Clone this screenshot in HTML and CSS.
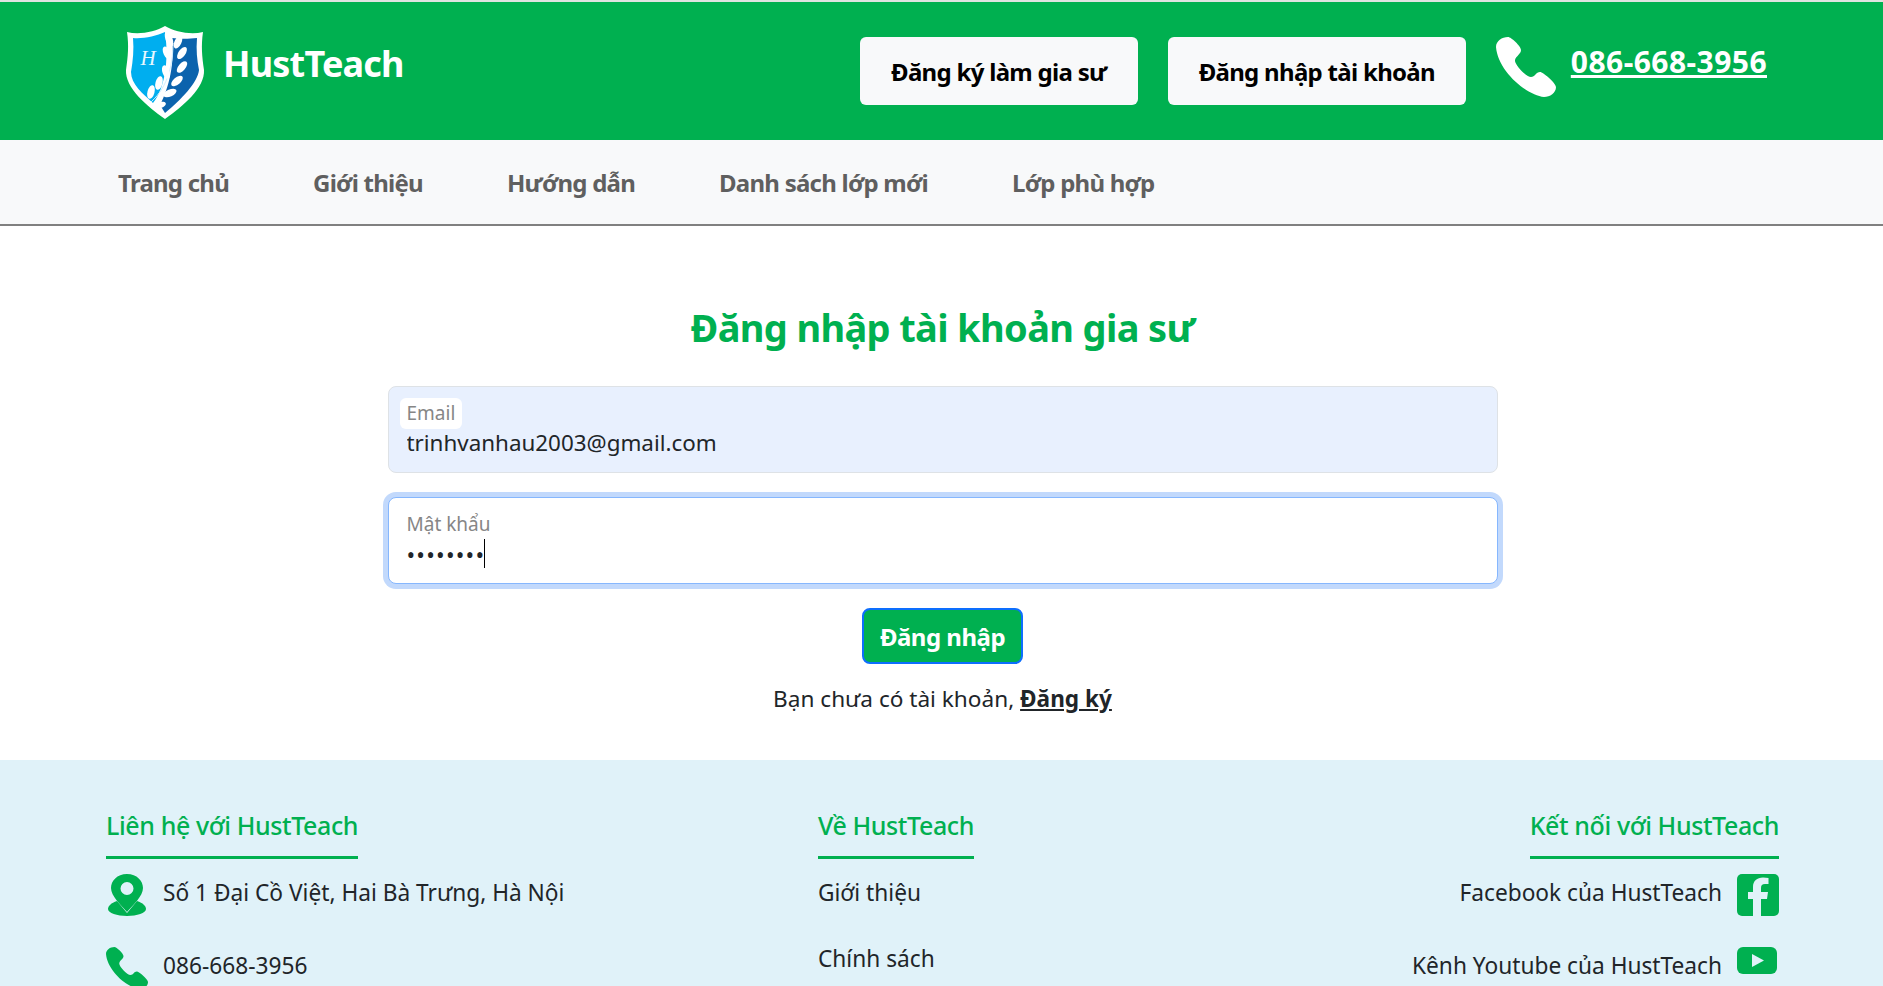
FILE: index.html
```html
<!DOCTYPE html>
<html lang="vi">
<head>
  <meta charset="utf-8" />
  <title>HustTeach - Đăng nhập</title>
  <link rel="stylesheet" href="styles.css">
</head>
<body>
<div class="page">

  <!-- HEADER -->
  <header class="topbar">
    <a class="brand" href="#">
      <svg class="brand-logo" viewBox="0 0 80 94">
        <path d="M40 0 C30 6 14 9 2 6 C4 20 3 30 1 44 C0 62 22 80 40 93 C58 80 80 62 79 44 C77 30 76 20 78 6 C66 9 50 6 40 0Z" fill="#fff"/>
        <path d="M40 6 C31 10 18 13 8 12 C9 24 8 34 6 46 C6 58 18 68 28 77 C40 62 44 34 40 6Z" fill="#00aeef"/>
        <path d="M47 12 C54 13 64 13 72 12 C71 24 72 34 74 44 C73 56 56 74 40 87 L35 79 C44 62 50 36 47 12Z" fill="#0b63ad"/>
        <text class="brand-h" x="23" y="39" text-anchor="middle">H</text>
        <path d="M48 17 C48 36 44 60 26 76" fill="none" stroke="#cfefff" stroke-width="1"/>
        <g fill="#fff">
          <ellipse cx="44" cy="13" rx="3.500" ry="8" transform="rotate(-20 44 13)"/>
          <ellipse cx="42" cy="27" rx="3.500" ry="7" transform="rotate(-25 42 27)"/>
          <ellipse cx="41" cy="46" rx="3.500" ry="7" transform="rotate(-20 41 46)"/>
          <ellipse cx="34" cy="57" rx="3.500" ry="7" transform="rotate(15 34 57)"/>
          <ellipse cx="26" cy="66" rx="3.500" ry="7" transform="rotate(15 26 66)"/>
          <ellipse cx="53" cy="16" rx="3.500" ry="7" transform="rotate(25 53 16)"/>
          <ellipse cx="57" cy="27" rx="3.500" ry="7" transform="rotate(35 57 27)"/>
          <ellipse cx="57" cy="41" rx="3.500" ry="7" transform="rotate(40 57 41)"/>
          <ellipse cx="52" cy="55" rx="3.500" ry="7" transform="rotate(50 52 55)"/>
          <ellipse cx="45" cy="67" rx="3.500" ry="7" transform="rotate(65 45 67)"/>
          <ellipse cx="35" cy="79" rx="3" ry="6" transform="rotate(75 35 79)"/>
        </g>
      </svg>
      <span class="brand-name">HustTeach</span>
    </a>
    <div class="topbar-actions">
      <a class="top-btn" href="#">Đăng ký làm gia sư</a>
      <a class="top-btn" href="#">Đăng nhập tài khoản</a>
      <svg class="top-phone" viewBox="0 0 60 60"><path class="phone-shape" d="M0 10 C0 4 6 0 12 0 C15 0 25 9 25 13 C25 17 20 19 19 23 C18 27 30 40 35 40 C39 40 40 35 44 35 C47 35 60 46 60 50 C60 56 54 60 48 60 C30 58 2 34 0 10Z"/></svg>
      <a class="top-number" href="#">086-668-3956</a>
    </div>
  </header>

  <!-- NAV -->
  <nav class="mainnav">
    <a href="#">Trang chủ</a>
    <a href="#">Giới thiệu</a>
    <a href="#">Hướng dẫn</a>
    <a href="#">Danh sách lớp mới</a>
    <a href="#">Lớp phù hợp</a>
  </nav>

  <!-- LOGIN FORM -->
  <main class="login">
    <h1 class="login-title">Đăng nhập tài khoản gia sư</h1>
    <form class="login-form">
      <div class="field field-filled">
        <label class="field-label" for="email">Email</label>
        <input class="field-input" id="email" type="text" value="trinhvanhau2003@gmail.com">
      </div>
      <div class="field field-focus">
        <label class="field-label" for="password">Mật khẩu</label>
        <input class="field-input field-password" id="password" type="password" value="12345678">
        <span class="caret"></span>
      </div>
      <button class="login-btn" type="button">Đăng nhập</button>
      <p class="login-note">Bạn chưa có tài khoản, <a href="#">Đăng ký</a></p>
    </form>
  </main>

  <!-- FOOTER -->
  <footer class="footer">
    <div class="footer-col">
      <h3 class="footer-title">Liên hệ với HustTeach</h3>
      <div class="contact-row">
        <svg class="footer-icon" viewBox="0 0 40 42">
          <path d="M20 0 C10 0 4 7 4 14 C4 22 14 31 20 38 C26 31 36 22 36 14 C36 7 30 0 20 0Z M20 8 A6.5 6.5 0 1 1 20 21 A6.5 6.5 0 1 1 20 8Z" fill="#00b050" fill-rule="evenodd"/>
          <path d="M10 27 C4 29 1 32 1 35 C1 39 10 42 20 42 C30 42 39 39 39 35 C39 32 36 29 30 27 L20 39Z" fill="#00b050"/>
        </svg>
        <span>Số 1 Đại Cồ Việt, Hai Bà Trưng, Hà Nội</span>
      </div>
      <div class="contact-row">
        <svg class="footer-icon" viewBox="0 0 60 60"><path class="phone-green" d="M0 10 C0 4 6 0 12 0 C15 0 25 9 25 13 C25 17 20 19 19 23 C18 27 30 40 35 40 C39 40 40 35 44 35 C47 35 60 46 60 50 C60 56 54 60 48 60 C30 58 2 34 0 10Z"/></svg>
        <span>086-668-3956</span>
      </div>
    </div>

    <div class="footer-col">
      <h3 class="footer-title">Về HustTeach</h3>
      <a class="footer-link" href="#">Giới thiệu</a>
      <a class="footer-link" href="#">Chính sách</a>
    </div>

    <div class="footer-col footer-right">
      <h3 class="footer-title">Kết nối với HustTeach</h3>
      <div class="contact-row">
        <span>Facebook của HustTeach</span>
        <svg class="footer-icon" viewBox="0 0 42 42">
          <rect width="42" height="42" rx="5" fill="#00b050"/>
          <path d="M24 42 V25 H30 L31 18 H24 V14 C24 11.500 25 10 28 10 H31.500 V4 C30 3.700 28 3.500 26 3.500 C20 3.500 16 7 16 13 V18 H11 V25 H16 V42Z" fill="#e0f2f9"/>
        </svg>
      </div>
      <div class="contact-row">
        <span>Kênh Youtube của HustTeach</span>
        <svg class="footer-icon" viewBox="0 0 42 42">
          <rect x="0" y="0" width="40" height="27" rx="6" fill="#00b050"/>
          <path d="M15 7 L27 13.500 L15 20Z" fill="#e0f2f9"/>
        </svg>
      </div>
    </div>
  </footer>

</div>
</body>
</html>
```

FILE: styles.css
```css
html, body {
  margin: 0;
  padding: 0;
  height: 100%;
  overflow: hidden;
  font-family: "Noto Sans", sans-serif;
  color: #212529;
  box-sizing: border-box;
}
*, *::before, *::after {
  box-sizing: inherit;
}
a {
  color: inherit;
  text-decoration: none;
}

.page {
  height: 986px;
  overflow: hidden;
  border-top: 2px solid #dfe3e1;
}

/* Header */
.topbar {
  display: flex;
  align-items: flex-start;
  justify-content: space-between;
  height: 138px;
  padding: 24px 116px 0 125px;
  background: #00b050;
}
.brand {
  display: flex;
  align-items: center;
  gap: 18px;
}
.brand-logo {
  width: 80px;
  height: 94px;
}
.brand-h {
  font-family: "Liberation Serif", serif;
  font-style: italic;
  font-size: 21px;
  fill: #e8f8ff;
}
.brand-name {
  margin-top: -20px;
  font-size: 36px;
  font-weight: 700;
  letter-spacing: -0.8px;
  color: #fff;
}
.topbar-actions {
  display: flex;
  align-items: flex-start;
  margin-top: 11px;
}
.top-btn {
  display: flex;
  align-items: center;
  justify-content: center;
  width: 278px;
  height: 68px;
  margin-right: 30px;
  border-radius: 6px;
  background: #f8f9fa;
  color: #000;
  font-size: 24px;
  font-weight: 700;
  letter-spacing: -0.7px;
}
.top-btn + .top-btn {
  width: 298px;
}
.top-phone {
  width: 60px;
  height: 60px;
  margin-right: 15px;
}
.phone-shape {
  fill: #fff;
}
.top-number {
  margin-top: 4px;
  font-size: 30px;
  font-weight: 700;
  letter-spacing: 0.45px;
  color: #fff;
  text-decoration: underline;
}

/* Nav */
.mainnav {
  display: flex;
  align-items: center;
  gap: 84px;
  height: 86px;
  padding: 1px 0 0 118px;
  background: #f8f9fa;
  border-bottom: 2px solid #808080;
}
.mainnav a {
  font-size: 24px;
  font-weight: 700;
  letter-spacing: -0.76px;
  color: #5f5f5f;
}

/* Login */
.login {
  height: 534px;
  padding: 76px 0 0 2px;
  background: #fff;
}
.login-title {
  margin: 0 0 34px;
  text-align: center;
  font-size: 38px;
  line-height: 50px;
  font-weight: 700;
  letter-spacing: -0.65px;
  color: #00b050;
}
.login-form {
  display: flex;
  flex-direction: column;
  align-items: center;
  width: 1110px;
  margin: 0 auto;
}
.field {
  position: relative;
  width: 100%;
  height: 87px;
  margin-bottom: 24px;
  padding: 11px 18px 0;
  border: 1px solid #dee2e6;
  border-radius: 8px;
}
.field-filled {
  background: #e8f0fe;
}
.field-focus {
  border-color: #86b7fe;
  box-shadow: 0 0 0 5px #c2d9fc;
  background: #fff;
}
.field-label {
  display: block;
  width: max-content;
  height: 31px;
  margin-left: -7px;
  padding: 0 7px;
  border-radius: 6px;
  font-size: 19px;
  line-height: 31px;
  color: #868686;
}
.field-filled .field-label {
  background: #fff;
}
.field-input {
  display: block;
  width: 100%;
  height: 34px;
  margin-top: -4px;
  padding: 0;
  border: 0;
  outline: 0;
  background: transparent;
  font-family: inherit;
  font-size: 22.4px;
  color: #212529;
}
.field-password {
  margin-top: -2px;
  font-size: 23px;
  letter-spacing: 1.2px;
}
/* text cursor in the focused input */
.caret {
  position: absolute;
  left: 95px;
  top: 41px;
  width: 1px;
  height: 29px;
  background: #000;
}
.login-btn {
  width: 161px;
  height: 56px;
  margin-bottom: 18px;
  border: 2px solid #0d6efd;
  border-radius: 8px;
  background: #00b050;
  color: #fff;
  font-family: inherit;
  font-size: 24px;
  font-weight: 700;
  letter-spacing: -0.5px;
}
.login-note {
  margin: 0;
  font-size: 22.6px;
  line-height: 34px;
}
.login-note a {
  font-weight: 700;
  text-decoration: underline;
}

/* Footer */
.footer {
  display: grid;
  grid-template-columns: 712px 1fr auto;
  height: 226px;
  padding: 47px 104px 0 106px;
  background: #e0f2f9;
}
.footer-col {
  display: flex;
  flex-direction: column;
  align-items: flex-start;
}
.footer-right {
  align-items: flex-end;
}
.footer-title {
  margin: 0 0 15px;
  padding-bottom: 13px;
  border-bottom: 3px solid #00b050;
  font-size: 25px;
  line-height: 36px;
  font-weight: 500;
  letter-spacing: -0.4px;
  color: #00b050;
}
.contact-row {
  display: flex;
  align-items: flex-start;
  gap: 15px;
  height: 73px;
  font-size: 22.7px;
  line-height: 38px;
}
.footer-icon {
  flex: none;
  width: 42px;
  height: 42px;
}
.phone-green {
  fill: #00b050;
}
.footer-link {
  height: 66px;
  font-size: 22.7px;
  line-height: 38px;
}
```
